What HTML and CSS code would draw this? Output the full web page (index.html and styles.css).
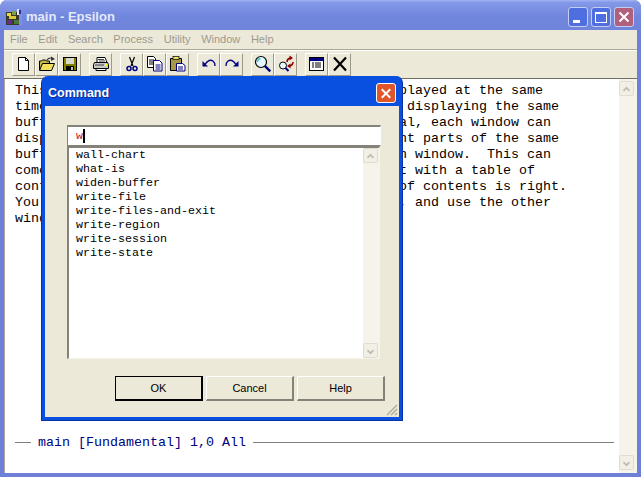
FILE: index.html
```html
<!DOCTYPE html>
<html>
<head>
<meta charset="utf-8">
<title>main - Epsilon</title>
<link rel="stylesheet" href="styles.css">
</head>
<body>
<div class="window">
  <div class="titlebar">
    <svg class="appicon" width="16" height="16" viewBox="0 0 16 16"><rect width="16" height="16" fill="#7c90e4"/><rect x="0" y="3" width="13" height="13" fill="#3a3a2a"/><rect x="1" y="4" width="4" height="3" fill="#e8d84a"/><rect x="6" y="2" width="4" height="4" fill="#7ea04a"/><rect x="3" y="7" width="7" height="3" fill="#d8c83a"/><rect x="1" y="11" width="5" height="4" fill="#6a2a8a"/><rect x="8" y="11" width="5" height="4" fill="#4a7a3a"/><rect x="11" y="0" width="2" height="6" fill="#e0e4fa"/><rect x="13" y="1" width="2" height="4" fill="#3a2a8a"/></svg>
    <span class="title-text">main - Epsilon</span>
    <div class="capbtns">
      <div class="capbtn"><svg width="18" height="18" viewBox="0 0 18 18"><rect x="4" y="12" width="7" height="3" fill="#fff"/></svg></div>
      <div class="capbtn"><svg width="18" height="18" viewBox="0 0 18 18"><rect x="3.5" y="4.500" width="11" height="10" fill="none" stroke="#fff"/><rect x="3" y="4" width="12" height="2" fill="#fff"/></svg></div>
      <div class="capbtn close"><svg width="18" height="18" viewBox="0 0 18 18"><path d="M4.500 4.500l9 9M13.500 4.500l-9 9" stroke="#fff" stroke-width="2"/></svg></div>
    </div>
  </div>
  <div class="client">
    <div class="menubar">
      <span>File</span><span>Edit</span><span>Search</span><span>Process</span><span>Utility</span><span>Window</span><span>Help</span>
    </div>
    <div class="toolbar">
      <div class="tb"><svg width="16" height="16" viewBox="0 0 16 16"><path d="M2.500 1.500h7l3 3v10h-10z" fill="#fff" stroke="#000"/><path d="M9.500 1.500v3h3" fill="none" stroke="#000"/></svg></div>
      <div class="tb"><svg width="18" height="16" viewBox="0 0 18 16"><path d="M1.500 14v-9h2l1-1h3l1 1h3v2" fill="#c8b840" stroke="#000"/><path d="M1.500 14.500l3-7h12l-3 7z" fill="#f0e060" stroke="#000"/><path d="M9 4q2-3 6-1.500" fill="none" stroke="#333" stroke-width="1.200"/><path d="M13 0.500l4 2.500-4 2z" fill="#333"/></svg></div>
      <div class="tb"><svg width="16" height="16" viewBox="0 0 16 16"><rect x="1" y="1" width="14" height="14" fill="#000"/><rect x="2" y="2" width="12" height="12" fill="#808000"/><rect x="4" y="2" width="8" height="6" fill="#d8d8c8"/><rect x="4" y="10" width="8" height="5" fill="#000"/><rect x="9" y="11" width="2" height="3" fill="#c0c0c0"/></svg></div>
      <div class="tb sep"><svg width="18" height="16" viewBox="0 0 18 16"><path d="M5 1.500h8l2 5h-10z" fill="#fff" stroke="#000"/><path d="M2.500 6.500h13l1 2v4h-15v-4z" fill="#c8c8c8" stroke="#000"/><path d="M4 12.500h10v2h-10z" fill="#fff" stroke="#000"/><path d="M3 9h9M6 3.500h6M7 5h6" stroke="#444"/><rect x="13" y="8" width="2" height="2" fill="#ff0"/></svg></div>
      <div class="tb sep"><svg width="16" height="16" viewBox="0 0 16 16"><path d="M5.500 1l3.500 9M10.500 1l-3.500 9" stroke="#000" stroke-width="1.200"/><circle cx="5" cy="12.500" r="2" fill="none" stroke="#000080" stroke-width="1.500"/><circle cx="11" cy="12.500" r="2" fill="none" stroke="#000080" stroke-width="1.500"/></svg></div>
      <div class="tb"><svg width="16" height="16" viewBox="0 0 16 16"><path d="M0.500 0.500h6l2 2v9h-8z" fill="#fff" stroke="#000"/><path d="M2 4h5M2 6h5M2 8h5" stroke="#000"/><path d="M6.500 4.500h6l2.500 2.500v8h-8.500z" fill="#fff" stroke="#000080"/><path d="M8.500 9h5M8.500 11h5M8.500 13h5" stroke="#000080"/></svg></div>
      <div class="tb"><svg width="17" height="16" viewBox="0 0 17 16"><path d="M1.500 2.500h11v12h-11z" fill="#a89848" stroke="#000"/><rect x="4" y="0.500" width="6" height="3" fill="#e8e060" stroke="#000" stroke-width=".7"/><path d="M7.500 7.500h6l2.500 2v5.500h-8.500z" fill="#fff" stroke="#000080"/><path d="M9 11h5M9 13h5" stroke="#000080"/></svg></div>
      <div class="tb sep"><svg width="16" height="16" viewBox="0 0 16 16"><path d="M1.500 5l5.500 5.500h-5.500z" fill="#000080"/><path d="M4 8.500q4-6 8-3.500 2 1.500 2 5" fill="none" stroke="#000080" stroke-width="1.300"/></svg></div>
      <div class="tb"><svg width="16" height="16" viewBox="0 0 16 16"><path d="M14.500 5l-5.500 5.500h5.500z" fill="#000080"/><path d="M12 8.500q-4-6-8-3.500-2 1.500-2 5" fill="none" stroke="#000080" stroke-width="1.300"/></svg></div>
      <div class="tb sep"><svg width="18" height="18" viewBox="0 0 18 18"><circle cx="7" cy="7" r="5.500" fill="#e6f8ff" stroke="#000" stroke-width="1.200"/><path d="M3.500 7a3.500 3.500 0 0 1 3-3.500" fill="none" stroke="#40c8c8" stroke-width="1.300"/><path d="M10.800 10.800l5.500 5.500" stroke="#000080" stroke-width="2.400"/></svg></div>
      <div class="tb"><svg width="18" height="18" viewBox="0 0 18 18"><circle cx="6" cy="10.500" r="3.500" fill="#e6f8ff" stroke="#000"/><path d="M8.500 13l3 3" stroke="#000080" stroke-width="2"/><path d="M10 7q0-3 3-4" fill="none" stroke="#900000" stroke-width="1.500"/><path d="M12.500 0.500v5l3.500-2.500z" fill="#900000"/><path d="M16 7q0 3-3 4" fill="none" stroke="#900000" stroke-width="1.500"/><path d="M13.500 8.500v5l-3.500-2.500z" fill="#900000"/></svg></div>
      <div class="tb sep"><svg width="17" height="16" viewBox="0 0 17 16"><rect x="1.500" y="1.500" width="14" height="13" fill="#fff" stroke="#000"/><rect x="2" y="2" width="13" height="3" fill="#000080"/><path d="M4 7h2M7 7h6M4 9h2M7 9h6M4 11h2M7 11h6" stroke="#000"/></svg></div>
      <div class="tb"><svg width="16" height="16" viewBox="0 0 16 16"><path d="M2 1.500l12 13M14 1.500l-12 13" stroke="#000" stroke-width="2.200"/></svg></div>
    </div>
    <div class="editor">
      <div class="bufpane">
<pre class="buffer">This editor can let you have several windows displayed at the same
time, and you can have two or even three windows displaying the same
buffer in two separate windows at once.  In normal, each window can
display and scroll to show several quite different parts of the same
buffer, moving point and view alone in the chosen window.  This can
come in handy when you view a large document text with a table of
contents at the top, and the one with the table of contents is right.
You can keep the table of contents on the screen, and use the other
window to read the text.</pre>
        <div class="modeline"><span class="rule short"></span><span class="modetext">main [Fundamental] 1,0 All</span><span class="rule grow"></span></div>
      </div>
      <div class="scroll">
        <div class="sbtn"><svg width="15" height="15" viewBox="0 0 15 15"><path d="M4 9l3.500-3.500 3.500 3.500" fill="none" stroke="#bdbdb0" stroke-width="2"/></svg></div>
        <div class="sbtn"><svg width="15" height="15" viewBox="0 0 15 15"><path d="M4 6l3.500 3.500 3.500-3.500" fill="none" stroke="#bdbdb0" stroke-width="2"/></svg></div>
      </div>
    </div>
  </div>
</div>

<div class="dialog">
  <div class="dlg-title">
    <span class="dlg-title-text">Command</span>
    <div class="dlg-close"><svg width="19" height="19" viewBox="0 0 19 19"><path d="M5 5l9 9M14 5l-9 9" stroke="#fff" stroke-width="2"/></svg></div>
  </div>
  <div class="dlg-body">
    <div class="cmdinput"><span class="typed">w</span><span class="caret"></span></div>
    <div class="listbox">
      <ul class="items">
        <li>wall-chart</li>
        <li>what-is</li>
        <li>widen-buffer</li>
        <li>write-file</li>
        <li>write-files-and-exit</li>
        <li>write-region</li>
        <li>write-session</li>
        <li>write-state</li>
      </ul>
      <div class="scroll inner">
        <div class="sbtn"><svg width="15" height="15" viewBox="0 0 15 15"><path d="M4 9l3.500-3.500 3.500 3.500" fill="none" stroke="#bdbdb0" stroke-width="2"/></svg></div>
        <div class="sbtn"><svg width="15" height="15" viewBox="0 0 15 15"><path d="M4 6l3.500 3.500 3.500-3.500" fill="none" stroke="#bdbdb0" stroke-width="2"/></svg></div>
      </div>
    </div>
    <div class="buttons">
      <div class="btn default">OK</div>
      <div class="btn">Cancel</div>
      <div class="btn">Help</div>
    </div>
    <svg class="grip" width="13" height="13" viewBox="0 0 13 13"><path d="M12 2L2 12M12 6L6 12M12 10L10 12" stroke="#a8a898" stroke-width="1.200"/></svg>
  </div>
</div>
</body>
</html>
```
FILE: styles.css
```css
* { box-sizing: border-box; }
html, body { margin: 0; padding: 0; width: 641px; height: 477px; overflow: hidden; background: #fff; }
body { font-family: "Liberation Sans", Arial, sans-serif; position: relative; }
.window { width: 641px; height: 477px; display: flex; flex-direction: column; background: #6f80d8; border-radius: 7px 7px 0 0; padding: 0 4px 4px 4px; }
.titlebar { height: 30px; flex: none; margin: 0 -4px; padding: 3px 7px 0 6px; display: flex; align-items: center; gap: 4px; border-radius: 7px 7px 0 0; background: linear-gradient(180deg, #a4b4f2 0, #8498e8 8%, #7187dd 55%, #6f84da 100%); }
.appicon { flex: none; }
.title-text { color: #e4e9fa; font-weight: bold; font-size: 13px; }
.capbtns { margin-left: auto; display: flex; gap: 3px; }
.capbtn { width: 20px; height: 20px; border: 1px solid #c4cdf2; border-radius: 3px; background: #4f6fe0; display: flex; }
.capbtn.close { background: #b0607a; }
.client { flex: 1; background: #ece9d8; display: flex; flex-direction: column; min-height: 0; }
.menubar { height: 20px; flex: none; display: flex; align-items: center; padding: 0 0 2px 6px; gap: 10.6px; font-size: 11px; color: #9c9a90; border-bottom: 1px solid #aca899; }
.toolbar { height: 29px; flex: none; display: flex; align-items: center; padding: 0 0 1px 8px; border-top: 1px solid #fff; border-bottom: 1px solid #716f64; }
.tb { width: 23px; height: 23px; background: #ece9d8; border: 1px solid; border-color: #fff #9d9a8a #9d9a8a #fff; display: flex; align-items: center; justify-content: center; flex: none; }
.tb.sep { margin-left: 8px; }
.editor { flex: 1; min-height: 0; display: flex; background: #fff; border-left: 1px solid #aca899; }
.bufpane { flex: 1; display: flex; flex-direction: column; min-width: 0; padding: 4px 0 0 10px; }
.buffer { margin: 0; font-family: "Liberation Mono", "Courier New", monospace; font-size: 13.33px; line-height: 16px; color: #000; height: 351px; overflow: hidden; }
.modeline { display: flex; align-items: center; height: 16px; font-family: "Liberation Mono", "Courier New", monospace; font-size: 13.33px; color: #000080; gap: 7px; padding-right: 5px; }
.rule { height: 1px; background: #808080; display: block; }
.rule.short { width: 16px; flex: none; }
.rule.grow { flex: 1; }
.scroll { width: 18px; flex: none; background: #f6f4ea; display: flex; flex-direction: column; justify-content: space-between; padding: 2px 3px 3px 0; }
.sbtn { width: 15px; height: 15px; background: #f2f0e4; border: 1px solid #e0ddd0; border-radius: 2px; display: flex; }
.dialog { position: absolute; left: 41px; top: 76px; width: 362px; height: 345px; background: #0a50e0; border-radius: 7px 7px 0 0; padding: 0 3px 3px 3px; display: flex; flex-direction: column; border: 1px solid #0831a8; border-top: none; }
.dlg-title { height: 30px; flex: none; display: flex; align-items: center; justify-content: space-between; padding: 3px 3px 0 3px; }
.dlg-title-text { color: #fff; font-weight: bold; font-size: 12.5px; text-shadow: 1px 1px 0 #0a2a90; }
.dlg-close { width: 20px; height: 20px; background: #e0552a; border: 1px solid #fff; border-radius: 3px; display: flex; }
.dlg-body { flex: 1; background: #ece9d8; position: relative; display: flex; flex-direction: column; padding: 19px 0 0 22px; min-height: 0; }
.cmdinput { width: 314px; height: 21px; flex: none; background: #fff; border: 1px solid; border-color: #85827a #fff #85827a #85827a; border-width: 2px 1px 1px 1px; padding-left: 8px; display: flex; align-items: center; }
.typed { font-family: "Liberation Mono", "Courier New", monospace; font-size: 11.67px; color: #c02020; }
.caret { width: 2px; height: 14px; background: #000; }
.listbox { width: 313px; height: 213px; flex: none; background: #fff; border: 1px solid; border-color: #85827a #f6f4ea #f6f4ea #85827a; border-width: 2px 1px 1px 2px; display: flex; }
.items { list-style: none; margin: 0; padding: 0 0 0 7px; flex: 1; font-family: "Liberation Mono", "Courier New", monospace; font-size: 11.67px; line-height: 14px; color: #000; }
.scroll.inner { width: 16px; padding: 0 1px 0 0; }
.buttons { display: flex; gap: 3px; margin-top: 17px; padding-left: 48px; }
.btn { width: 88px; height: 25px; background: #ece9d8; border: 1px solid; border-color: #fff #85827a #85827a #fff; border-width: 1px 2px 2px 1px; display: flex; align-items: center; justify-content: center; font-size: 11px; color: #000; }
.btn.default { border-color: #000; }
.grip { position: absolute; right: 1px; bottom: 1px; }
```
